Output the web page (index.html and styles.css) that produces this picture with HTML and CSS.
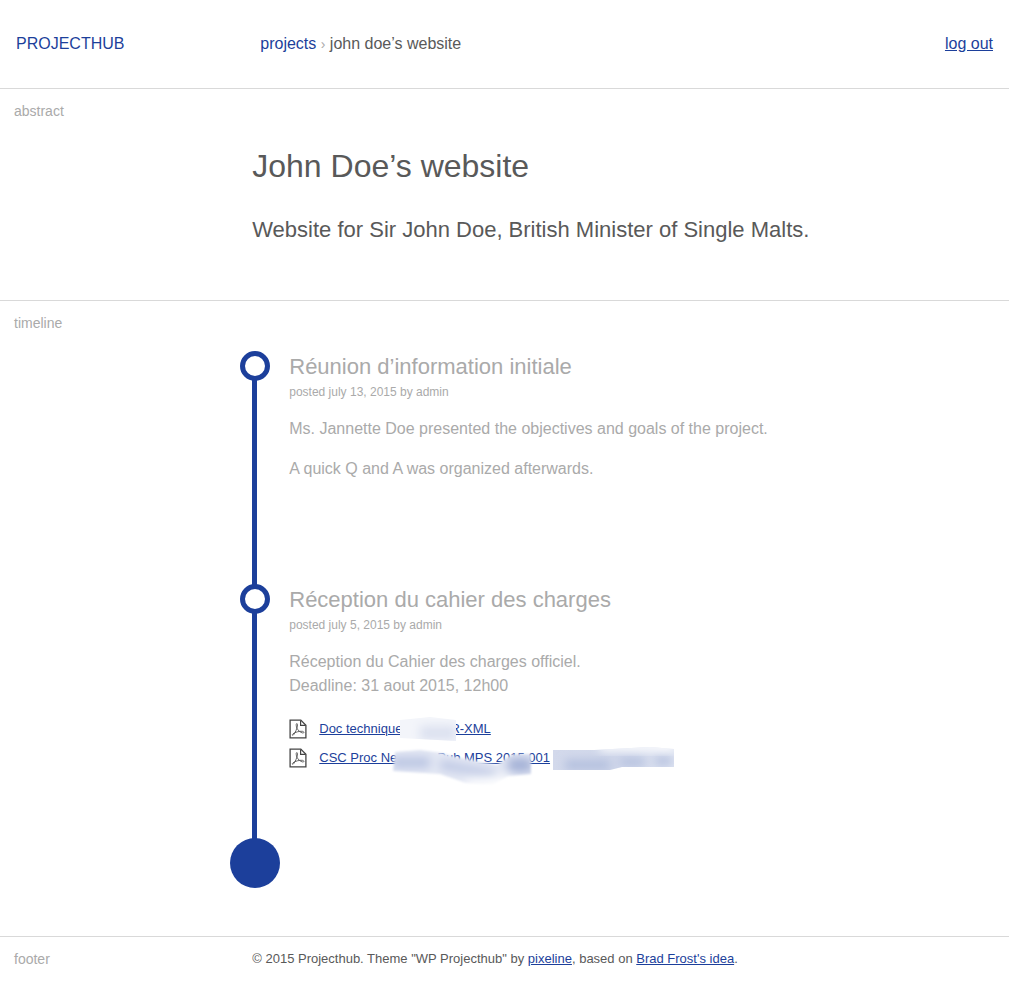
FILE: index.html
```html
<!DOCTYPE html>
<html lang="en">
<head>
<meta charset="utf-8">
<meta name="viewport" content="width=device-width, initial-scale=1">
<title>John Doe’s website – Projecthub</title>
<link rel="stylesheet" href="styles.css">
</head>
<body>
<svg class="defs" aria-hidden="true">
  <symbol id="pdf" viewBox="0 0 18 20">
    <path d="M1.1 1.1H11.8L16.9 6.2V18.9H1.1Z" fill="#fff" stroke="#444" stroke-width="1.3"/>
    <path d="M11.6 1.4V6.4H16.6" fill="none" stroke="#444" stroke-width="1.2"/>
    <path d="M7.8 4.6C6.8 4.6 7.2 7.4 7.9 9.2C8.9 11.4 11.6 13.6 13.8 14C15.4 14.2 15.2 12.5 13.4 12.3C10.4 12 6 13.2 4 14.8C2.5 16.2 3.6 17 4.8 15.5C6.4 13.3 8 9.6 8.4 7C8.6 5.4 8.4 4.6 7.8 4.6Z" fill="none" stroke="#555" stroke-width=".9"/>
  </symbol>
</svg>
<header class="row header">
  <a class="brand" href="#">PROJECTHUB</a>
  <div class="bar">
    <nav class="crumbs" aria-label="Breadcrumb"><a href="#">projects</a> <span class="sep">›</span> <span>john doe’s website</span></nav>
    <a class="logout" href="#">log out</a>
  </div>
</header>
<main>
  <section class="row">
    <div class="label">abstract</div>
    <div class="abstract">
      <h1>John Doe’s website</h1>
      <p>Website for Sir John Doe, British Minister of Single Malts.</p>
    </div>
  </section>
  <section class="row">
    <div class="label">timeline</div>
    <div class="timeline">
      <article class="entry">
        <div class="rail"><span class="dot"></span></div>
        <div class="entry-body">
          <h2>Réunion d’information initiale</h2>
          <div class="meta">posted july 13, 2015 by admin</div>
          <p>Ms. Jannette Doe presented the objectives and goals of the project.</p>
          <p>A quick Q and A was organized afterwards.</p>
        </div>
      </article>
      <article class="entry entry-first">
        <div class="rail"><span class="dot"></span></div>
        <div class="entry-body">
          <h2>Réception du cahier des charges</h2>
          <div class="meta">posted july 5, 2015 by admin</div>
          <p>Réception du Cahier des charges officiel.<br>Deadline: 31 aout 2015, 12h00</p>
          <div class="files">
            <ul>
              <li><svg class="icon" aria-hidden="true"><use href="#pdf"/></svg><a href="#">Doc technique<span class="gap gap-wide"></span>R-XML</a></li>
              <li><svg class="icon" aria-hidden="true"><use href="#pdf"/></svg><a href="#">CSC Proc Ne<span class="gap"></span>Pub MPS 2015 001 </a></li>
            </ul>
            <svg class="smudge" viewBox="389 714 290 75" aria-hidden="true">
              <defs>
                <filter id="soft" x="-50%" y="-50%" width="200%" height="200%"><feGaussianBlur stdDeviation="5"/></filter>
                <filter id="edge" x="-10%" y="-10%" width="120%" height="120%"><feGaussianBlur stdDeviation="1"/></filter>
                <linearGradient id="fade" x1="0" x2="1"><stop offset="0" stop-color="#d3d9eb"/><stop offset=".5" stop-color="#d0d7ea"/><stop offset="1" stop-color="#e0e5f2"/></linearGradient>
                <clipPath id="c1"><path d="M400 720L430 717L456 720V741L400 738Z"/></clipPath>
                <clipPath id="c2"><path d="M395 752L420 750L442 753L456 757L497 765L508 757L514 754H531V774L508 776L492 784L466 783L440 774L393 771Z"/></clipPath>
                <clipPath id="c3"><path d="M553 750H594L650 747L674 749V767H622L610 770H553Z"/></clipPath>
              </defs>
              <g clip-path="url(#c1)">
                <path d="M395 712H460V745H395Z" fill="#f3f5fa"/>
                <path d="M420 726H456V740H420Z" fill="#dce1f0" filter="url(#soft)"/>
              </g>
              <g filter="url(#edge)">
                <g clip-path="url(#c2)">
                  <path d="M390 745H535V790H390Z" fill="#e4e8f4"/>
                  <path d="M392 757H430V768H392ZM440 760L495 771V777L440 769Z" fill="#bac5e2" filter="url(#soft)"/>
                  <path d="M508 758H532V772H508Z" fill="#a3b0d6" filter="url(#soft)"/>
                  <path d="M465 781L510 776V790H465Z" fill="#fff" filter="url(#soft)"/>
                </g>
              </g>
              <g clip-path="url(#c3)">
                <path d="M550 745H680V775H550Z" fill="url(#fade)"/>
                <path d="M565 760H610V770H565ZM620 758H645V766H620ZM655 757H672V765H655Z" fill="#b3bfde" filter="url(#soft)"/>
                <path d="M600 742H674V751H600Z" fill="#fff" filter="url(#soft)"/>
              </g>
            </svg>
          </div>
        </div>
      </article>
      <div class="origin"></div>
    </div>
  </section>
</main>
<footer class="row">
  <div class="label">footer</div>
  <p class="credits">© 2015 Projecthub. Theme "WP Projecthub" by <a href="#">pixeline</a>, based on <a href="#">Brad Frost's idea</a>.</p>
</footer>
</body>
</html>
```
FILE: styles.css
```css
* { box-sizing: border-box; }
body {
  margin: 0;
  background: #fff;
  color: #595959;
  font: 16px/24px "Liberation Sans", Arial, sans-serif;
}
h1, h2, p, ul { margin: 0; padding: 0; font-weight: 400; }
a { color: #1c3f9b; }
.defs { display: none; }

.row { display: grid; grid-template-columns: 25% 1fr; }
.row + .row, main, footer { border-top: 1px solid #d9d9d9; }
.label { padding: 12px 14px; font-size: 14px; line-height: 20px; color: #aaa; }

.header { padding: 32px 0; align-items: center; }
.brand { padding-left: 16px; text-decoration: none; }
.bar { display: flex; justify-content: space-between; padding: 0 16px 0 8px; }
.crumbs a { text-decoration: none; }
.sep { color: #aaa; font-size: 14px; }

.abstract { padding: 57px 16px 54px 0; }
.abstract h1 { font-size: 32px; line-height: 40px; }
.abstract p { margin-top: 28px; font-size: 22px; line-height: 32px; }

.timeline { padding: 50px 16px 48px 0; margin-left: -22px; color: #aaa; }
.entry { display: grid; grid-template-columns: 50px 1fr; column-gap: 9px; }
.rail { display: flex; flex-direction: column; align-items: center; }
.rail::after { content: ""; flex: 1; width: 5px; margin: -2px 1px -2px 0; background: #1c3f9b; }
.dot { width: 30px; height: 30px; border: 5px solid #1c3f9b; border-radius: 50%; }
.entry-body { padding-bottom: 103px; }
.entry-first .entry-body { padding-bottom: 66px; }
.entry h2 { font-size: 22px; line-height: 32px; }
.meta { padding: 1px 0; font-size: 12px; line-height: 16px; }
.entry p { margin-top: 16px; }
.origin { width: 50px; height: 50px; border-radius: 50%; background: #1c3f9b; }

.files { position: relative; margin-top: 16px; font-size: 13px; line-height: 29px; }
.files ul { list-style: none; }
.files li { display: flex; align-items: center; gap: 12px; }
.icon { width: 18px; height: 20px; flex: none; }
.gap { display: inline-block; width: 40px; }
.gap-wide { width: 48px; }
.smudge { position: absolute; left: 100px; top: 0; width: 290px; height: 75px; }

.credits { padding: 12px 16px 12px 0; font-size: 13px; line-height: 20px; }
```
